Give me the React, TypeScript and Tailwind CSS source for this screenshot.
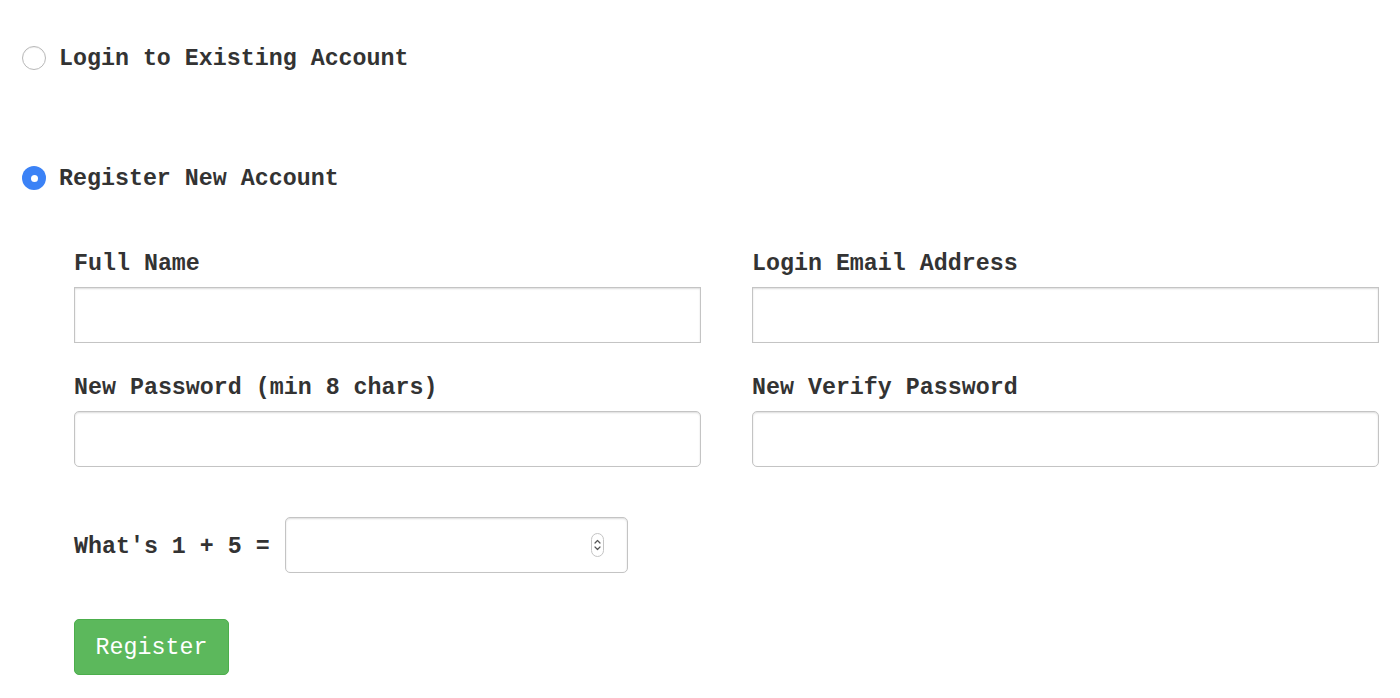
import React from "react";

const mono = "font-['Liberation_Mono','Courier_New',monospace]";

function Field({ label, rounded }: { label: string; rounded?: boolean }) {
  return (
    <div className="flex flex-col">
      <div className="h-[32px] pt-[4px] leading-[28px] text-[23.3px] font-bold text-[#333] whitespace-pre">{label}</div>
      <input
        type="text"
        className={`mt-[9px] h-[56px] w-full bg-white border border-[#c4c4c4] shadow-[inset_0_1px_2px_rgba(0,0,0,0.14)] outline-none ${rounded ? "rounded-[5px]" : ""}`}
      />
    </div>
  );
}

export default function App() {
  return (
    <div className={`${mono} bg-white w-[1400px] h-[698px] overflow-hidden pl-[22px] pr-[21px]`}>
      <div className="pt-[46px] flex items-center gap-[13px]">
        <span className="w-[24px] h-[24px] rounded-full border border-[#b8b8b8] bg-white shadow-[inset_0_1px_1px_rgba(0,0,0,0.06)]" />
        <span className="h-[24px] pt-[1px] leading-[24px] text-[23.3px] font-bold text-[#333]">Login to Existing Account</span>
      </div>
      <div className="mt-[96px] flex items-center gap-[13px]">
        <span className="w-[24px] h-[24px] rounded-full bg-[#3b82f6] flex items-center justify-center">
          <span className="w-[7px] h-[7px] rounded-full bg-white" />
        </span>
        <span className="h-[24px] pt-[1px] leading-[24px] text-[23.3px] font-bold text-[#333]">Register New Account</span>
      </div>
      <div className="ml-[52px] mt-[56px] grid grid-cols-2 gap-x-[51px] gap-y-[27px]">
        <Field label="Full Name" />
        <Field label="Login Email Address" />
        <Field label="New Password (min 8 chars)" rounded />
        <Field label="New Verify Password" rounded />
      </div>
      <div className="ml-[52px] mt-[50px] flex items-center gap-[15px]">
        <span className="pt-[3px] text-[23.3px] font-bold text-[#333] whitespace-pre leading-[28px]">What's 1 + 5 =</span>
        <div className="relative w-[343px] h-[56px]">
          <input
            type="text"
            className="w-full h-full bg-white border border-[#c4c4c4] rounded-[5px] shadow-[inset_0_1px_2px_rgba(0,0,0,0.14)] outline-none"
          />
          <div className="absolute right-[24px] top-[16px] w-[13px] h-[24px] rounded-full border border-[#c4c4c4] bg-white flex items-center justify-center">
            <svg width="9" height="16" viewBox="0 0 9 16" fill="none" stroke="#555" strokeWidth="1.2" strokeLinecap="round" strokeLinejoin="round">
              <path d="M2 6 L4.5 3.5 L7 6" />
              <path d="M2 10 L4.5 12.5 L7 10" />
            </svg>
          </div>
        </div>
      </div>
      <button className="ml-[52px] mt-[46px] w-[155px] h-[56px] rounded-[5px] bg-[#5cb85c] border border-[#4cae4c] text-white text-[23.3px] leading-[28px] pt-[2px]">
        Register
      </button>
    </div>
  );
}
